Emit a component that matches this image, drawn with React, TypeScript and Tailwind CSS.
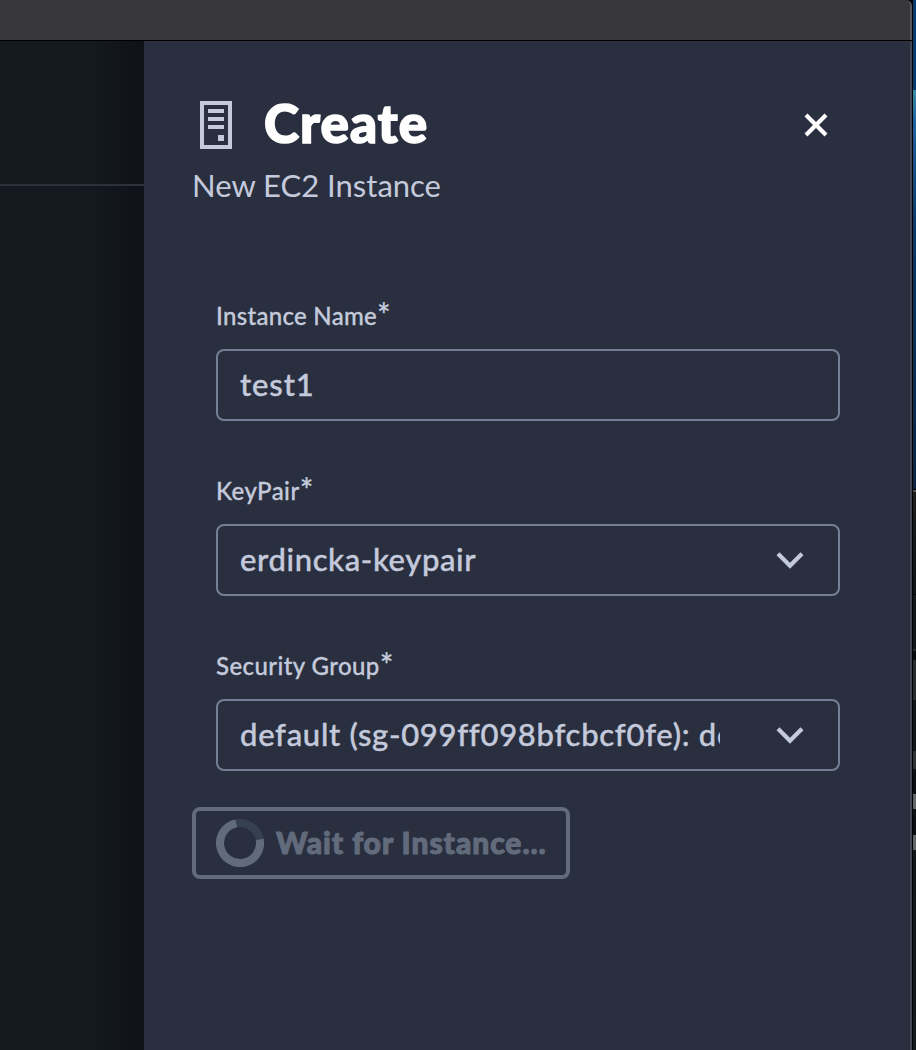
import React from "react";

function ServerIcon() {
  return (
    <svg width="48" height="48" viewBox="0 0 48 48" className="block shrink-0" fill="#c4cadb" shapeRendering="crispEdges">
      <path fillRule="evenodd" d="M8 0h32v48H8zM12 4v40h24V4z" />
      <path d="M16 8h16v4H16zM16 16h16v4H16zM16 24h16v4H16z" />
      <path d="M26 34h6v6h-6z" />
    </svg>
  );
}

function Chevron() {
  return (
    <svg width="28" height="20" viewBox="0 0 28 20" className="block shrink-0" fill="none" stroke="#c4cadb" strokeWidth="4.2">
      <path d="M2 3.8 14 15.8 26 3.8" />
    </svg>
  );
}

function Spinner() {
  return (
    <svg width="48" height="48" viewBox="0 0 48 48" className="block shrink-0" fill="none" strokeWidth="8">
      <circle cx="24" cy="24" r="20" stroke="#374050" />
      <path d="M43.7 20.5A20 20 0 1 1 20.2 4.4" stroke="#626b7c" />
    </svg>
  );
}

function Field({ label, labelClass, value, valueClass, select }: {
  label: string;
  labelClass: string;
  value: string;
  valueClass: string;
  select?: boolean;
}) {
  return (
    <div className="h-[175px]">
      <div className="flex h-[50px] items-start text-[24px] leading-[34px] font-medium whitespace-nowrap [-webkit-text-stroke:0.3px_#c4cadb]">
        <span className={labelClass}>{label}</span>
        <span className="text-[32px] leading-[31px]">*</span>
      </div>
      <div className="flex h-[72px] w-[624px] items-center justify-between rounded-[8px] border-2 border-[#757f95] pr-[34px] pl-[22px]">
        <div className="w-[480px] overflow-hidden pb-[2px] text-[31px] leading-[48px] font-medium whitespace-nowrap [-webkit-text-stroke:0.4px_#c4cadb]">
          <span className={valueClass}>{value}</span>
        </div>
        {select && <Chevron />}
      </div>
    </div>
  );
}

export default function App() {
  return (
    <div className="flex h-[1050px] w-[916px] overflow-hidden bg-black font-['Lato','Open_Sans',sans-serif] text-[#c4cadb]">
      <div className="flex w-[912px] shrink-0 flex-col">
        <div className="h-[40px] shrink-0 rounded-tr-[6px] border-r-2 border-[#55565a] bg-[#38383b]" />
        <div className="h-px shrink-0 bg-black" />
        <div className="flex min-h-0 flex-1">
          <div className="flex w-[144px] shrink-0 flex-col bg-linear-to-r from-[#151a21] from-55% to-[#0f1218]">
            <div className="h-[143px]" />
            <div className="h-[2px] bg-[#2d3139]" />
          </div>
          <main className="w-[768px] border-t border-r-2 border-t-[#30333e] border-r-[#424955] bg-[#292f3f] px-[48px]">
            <header className="h-[257px] pt-[59px]">
              <div className="flex h-[48px] items-center">
                <ServerIcon />
                <h1 className="ml-[24px] pb-[5px] text-[53px] leading-[60px] font-black whitespace-nowrap text-white [-webkit-text-stroke:1.6px_white]">
                  <span className="tracking-[1.1px]">Create</span>
                </h1>
                <svg width="24" height="24" viewBox="0 0 24 24" className="mr-[34px] ml-auto block" fill="none" stroke="#fff" strokeWidth="4.2">
                  <path d="M2 2 22 22M22 2 2 22" />
                </svg>
              </div>
              <p className="mt-[12px] text-[31px] leading-[48px] whitespace-nowrap">
                <span className="tracking-[0px]">New EC2 Instance</span>
              </p>
            </header>
            <form className="pl-[24px]">
              <Field label="Instance Name" labelClass="tracking-[0.3px]" value="test1" valueClass="tracking-[0.9px]" />
              <Field label="KeyPair" labelClass="tracking-[0.45px]" value="erdincka-keypair" valueClass="tracking-[0.62px]" select />
              <Field label="Security Group" labelClass="tracking-[0.4px]" value="default (sg-099ff098bfcbcf0fe): default" valueClass="tracking-[0.71px] [font-variant-ligatures:none]" select />
            </form>
            <button className="-mt-[17px] flex h-[72px] w-[378px] items-center rounded-[8px] border-4 border-[#626a7b] pl-[20px] text-[#626b7c]">
              <Spinner />
              <span className="ml-[12px] pb-[3px] text-[30px] leading-[48px] font-black tracking-[0.95px] whitespace-nowrap [-webkit-text-stroke:1px_#626b7c]">Wait for Instance...</span>
            </button>
          </main>
        </div>
      </div>
      <div className="ml-px flex w-[3px] flex-col">
        <div className="h-[90px] bg-[#063a70]" />
        <div className="h-[30px] bg-linear-to-b from-[#3c8ba2] to-[#2163a0]" />
        <div className="h-[369px] bg-linear-to-b from-[#2163a0] via-[#0b3766] via-30% to-[#0c2440]" />
        <div className="mt-px h-[2px] bg-[#555659]" />
        <div className="h-[102px] bg-linear-to-b from-[#1d1d1d] to-[#0e1115]" />
        <div className="mt-px h-[54px] bg-[#11161b]" />
        <div className="h-[2px] bg-[#292c2f]" />
        <div className="h-[9px] bg-[#080b0e]" />
        <div className="h-[40px] bg-[#2b2c2d]" />
        <div className="h-[51px] bg-[#11161a]" />
        <div className="h-[18px] bg-[#303336]" />
        <div className="h-[25px] bg-[#0c0f13]" />
        <div className="h-[15px] bg-[#626466]" />
        <div className="h-[26px] bg-[#0c0f13]" />
        <div className="h-[15px] bg-[#626466]" />
        <div className="flex-1 bg-linear-to-b from-[#11161a] to-[#14191d]" />
      </div>
    </div>
  );
}
